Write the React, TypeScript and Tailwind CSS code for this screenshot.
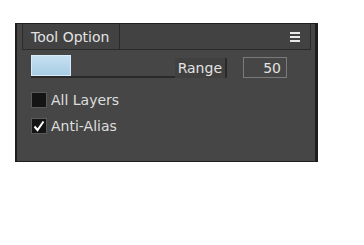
import React from "react";

export default function App() {
  const font = { fontFamily: "Tahoma, 'DejaVu Sans', 'Open Sans', sans-serif" };
  return (
    <div className="w-[364px] h-[245px] bg-white pt-[23px] pl-[15px]" style={font}>
      <div className="w-[303px] h-[139px] bg-[#464646] border-l-2 border-t border-r-[3px] border-b border-[#1e1e1e] flex flex-col">
        <div className="ml-[5px] mr-[4px] h-[26px] flex items-stretch border border-t-0 border-[#2a2a2a] bg-[#424242]">
          <div className="w-[97px] border-r border-[#2a2a2a] flex items-center pl-[8px] text-[14px] text-[#e2e2e2] leading-none">
            Tool Option
          </div>
          <div className="flex-1" />
          <div className="w-[20px] flex items-center justify-start">
            <div className="flex flex-col gap-[2px]">
              <div className="w-[10px] h-[2px] bg-[#e8e8e8]" />
              <div className="w-[10px] h-[2px] bg-[#e8e8e8]" />
              <div className="w-[10px] h-[2px] bg-[#e8e8e8]" />
            </div>
          </div>
        </div>
        <div className="flex items-end mt-[5px] ml-[14px] h-[23px]">
          <div className="w-[196px] h-[23px] border-b-2 border-[#2a2a2a] flex items-end relative">
            <div className="w-[40px] h-[21px] bg-gradient-to-b from-[#c6e0f0] to-[#a8cde5] border border-[#d8ecf7]" />
            <div className="absolute right-0 bottom-[-2px] h-[20px] pl-[3px] pr-[3px] bg-[#404040] border-r-2 border-[#2a2a2a] text-[14px] text-[#e2e2e2] leading-none flex items-center">
              Range
            </div>
          </div>
          <div className="ml-[16px] w-[44px] h-[21px] border border-[#7a7a7a] flex items-center justify-end pr-[5px] text-[14px] text-[#e2e2e2] leading-none">
            50
          </div>
        </div>
        <div className="ml-[14px] mt-[14px] flex flex-col gap-[10px]">
          <div className="flex items-center gap-[4px]">
            <div className="w-[16px] h-[16px] bg-[#141414] border border-[#5a5a5a]" />
            <span className="text-[14px] text-[#dedede] leading-none">All Layers</span>
          </div>
          <div className="flex items-center gap-[4px]">
            <div className="w-[16px] h-[16px] bg-[#141414] border border-[#5a5a5a] flex items-center justify-center">
              <svg width="12" height="12" viewBox="0 0 12 12">
                <path d="M1.5 6.5 L4.5 10 L10.5 1.5" stroke="#ffffff" strokeWidth="2" fill="none" />
              </svg>
            </div>
            <span className="text-[14px] text-[#dedede] leading-none">Anti-Alias</span>
          </div>
        </div>
      </div>
    </div>
  );
}
